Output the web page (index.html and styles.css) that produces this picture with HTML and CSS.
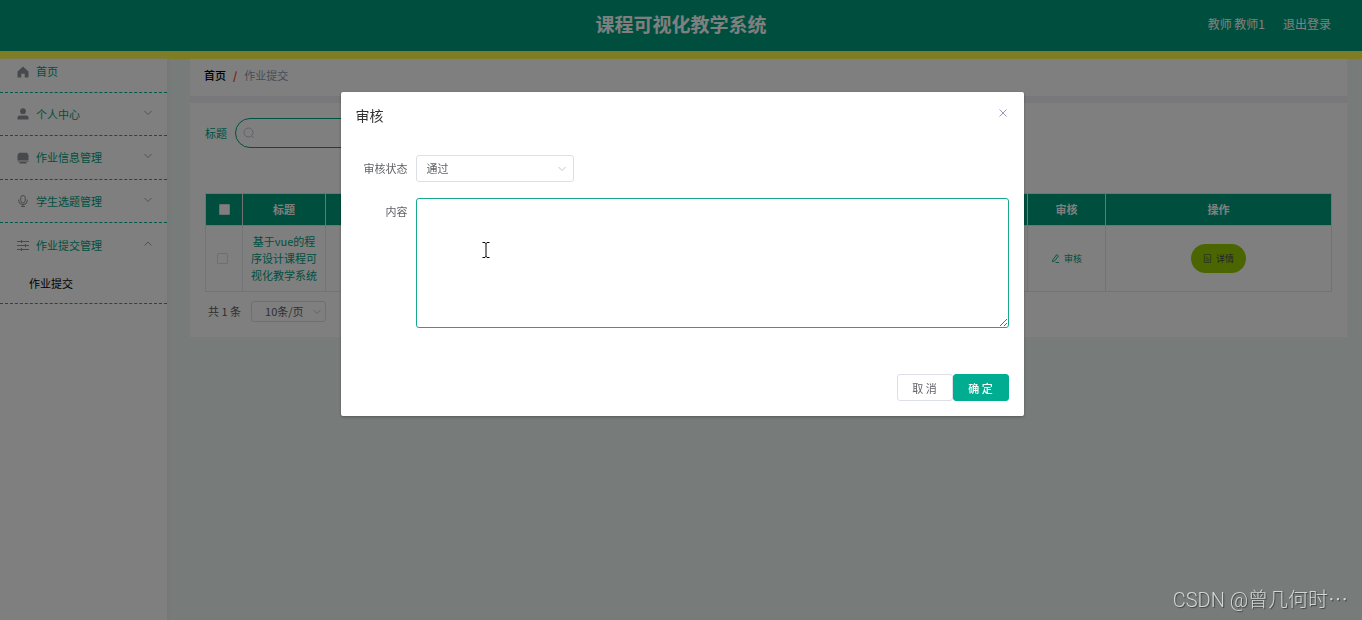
FILE: index.html
```html
<!DOCTYPE html>
<html lang="zh-CN">
<head>
<meta charset="utf-8">
<title>课程可视化教学系统</title>
<link rel="stylesheet" href="styles.css">
</head>
<body>
<div class="app">
  <header class="topbar">
    <h1 class="topbar-title">课程可视化教学系统</h1>
    <div class="topbar-user"><span>教师 教师1</span><a href="#" class="logout">退出登录</a></div>
  </header>
  <div class="layout">
    <nav class="sidebar">
      <a href="#" class="menu-item menu-home">
        <svg class="menu-icon" viewBox="0 0 12 12"><path fill="currentColor" d="M6 .5.5 5.6V11.5H4.3V7.8h3.4v3.7h3.8V5.6z"/></svg><span>首页</span></a>
      <a href="#" class="menu-item">
        <svg class="menu-icon" viewBox="0 0 12 12"><circle cx="6" cy="3.2" r="2.9" fill="currentColor"/><path fill="currentColor" d="M.5 11.5V9.6Q.5 7.5 2.8 7.5H9.2Q11.5 7.5 11.5 9.6v1.9z"/></svg><span>个人中心</span>
        <svg class="arrow" viewBox="0 0 8 8"><path d="M.5 2 4 5.5 7.500 2"/></svg></a>
      <a href="#" class="menu-item menu-tall">
        <svg class="menu-icon" viewBox="0 0 12 12"><path fill="currentColor" d="M2 .8h8L11.500 3v5H.5V3zM.5 8.500h11v.9H.5zM2.500 10h7v1.500h-7z"/></svg><span>作业信息管理</span>
        <svg class="arrow" viewBox="0 0 8 8"><path d="M.5 2 4 5.5 7.500 2"/></svg></a>
      <a href="#" class="menu-item">
        <svg class="menu-icon line" viewBox="0 0 12 12"><rect x="3.8" y=".5" width="4.400" height="7.500" rx="2.200"/><path d="M1.800 4.500v1.700Q2 9.600 6 9.600t4.200-3.400V4.500M6 9.600v1.900M4 11.500h4"/></svg><span>学生选题管理</span>
        <svg class="arrow" viewBox="0 0 8 8"><path d="M.5 2 4 5.5 7.500 2"/></svg></a>
      <div class="menu-group">
        <a href="#" class="menu-item menu-tall">
          <svg class="menu-icon line" viewBox="0 0 12 12"><path d="M0 2.500h12M0 6.500h12M0 10.500h12M4.500 1v3M8.500 5v3M4.500 9v3"/></svg><span>作业提交管理</span>
          <svg class="arrow" viewBox="0 0 8 8"><path d="M.5 5.500 4 2 7.500 5.500"/></svg></a>
        <a href="#" class="submenu-item">作业提交</a>
      </div>
    </nav>
    <main class="main">
      <div class="breadcrumb"><a href="#" class="crumb-home">首页</a><span class="crumb-sep">/</span><span>作业提交</span></div>
      <section class="card">
        <div class="search-row">
          <label for="search-title">标题</label>
          <div class="search-box">
            <svg viewBox="0 0 12 12"><circle cx="5.500" cy="5.500" r="4.500"/><path d="m9 9 2 2"/></svg>
            <input id="search-title" type="text">
          </div>
        </div>
        <table class="table">
          <colgroup><col class="col-check"><col class="col-title"><col><col class="col-audit"><col class="col-action"></colgroup>
          <thead><tr><th><input class="check" type="checkbox" aria-label="全选"></th><th>标题</th><th></th><th>审核</th><th>操作</th></tr></thead>
          <tbody><tr>
            <td><input class="check" type="checkbox" aria-label="选择"></td>
            <td class="cell-title">基于vue的程序设计课程可视化教学系统</td>
            <td></td>
            <td><button class="audit-btn" type="button"><svg viewBox="0 0 10 10"><path d="M2 6.500 6.300.800 8.200 2.200 4 7.800 1.700 8.600zM5 9.500h4"/></svg><span>审核</span></button></td>
            <td><button class="detail-btn" type="button"><svg viewBox="0 0 10 10"><path d="M1.500.500h7v9h-7zM3 3.500h2M3 5.500h4M3 7.500h4"/></svg><span>详情</span></button></td>
          </tr></tbody>
        </table>
        <div class="pager">
          <span>共 1 条</span>
          <div class="select-wrap page-size"><select aria-label="每页条数"><option>10条/页</option></select><svg class="arrow" viewBox="0 0 8 8"><path d="M.5 2 4 5.5 7.500 2"/></svg></div>
        </div>
      </section>
    </main>
  </div>
</div>

<div class="overlay">
  <form class="dialog" role="dialog" aria-labelledby="dialog-title">
    <div class="dialog-head">
      <h2 id="dialog-title">审核</h2>
      <button class="close" type="button" aria-label="关闭"><svg viewBox="0 0 8 8"><path d="m.5.500 7 7M7.500.500l-7 7"/></svg></button>
    </div>
    <div class="form-row">
      <label for="status">审核状态</label>
      <div class="select-wrap status"><select id="status"><option>通过</option></select><svg class="arrow" viewBox="0 0 8 8"><path d="M.5 2 4 5.5 7.500 2"/></svg></div>
    </div>
    <div class="form-row">
      <label for="content">内容</label>
      <textarea id="content"></textarea>
    </div>
    <div class="dialog-foot">
      <button class="btn" type="button">取 消</button>
      <button class="btn btn-primary" type="button">确 定</button>
    </div>
  </form>
</div>
<svg class="cursor" viewBox="0 0 8 16"><path d="M.5.500h2.500l1 1 1-1h2.500M4 1v14M.5 15.500h2.500l1-1 1 1h2.500"/></svg>
<div class="watermark">CSDN @曾几何时⋯</div>
</body>
</html>
```

FILE: styles.css
```css
* { box-sizing: border-box; }
body, h1, h2 { margin: 0; }
body, button, input, select, textarea {
  font-family: "Noto Sans CJK SC", sans-serif;
  font-size: 11px;
}
body { color: #606266; line-height: 17px; overflow: hidden; }
a { text-decoration: none; color: inherit; }
svg { display: block; fill: none; stroke: currentColor; flex: none; }
button { cursor: pointer; }

.app { min-height: 100vh; display: flex; flex-direction: column; background: #eff8f5; }
.topbar {
  display: grid;
  grid-template-columns: 1fr auto 1fr;
  align-items: center;
  height: 59px;
  padding: 0 31px 4px;
  background: #009f7d;
  border-bottom: 8px solid #fffa48;
  color: #fff;
}
.topbar-title { grid-column: 2; font-size: 19px; line-height: 28px; font-weight: 700; }
.topbar-user { display: flex; justify-content: flex-end; gap: 18px; font-size: 12px; }

.layout { flex: 1; display: flex; }
.sidebar { width: 167px; flex: none; background: #fff; box-shadow: 2px 0 3px #e8eeec; color: #00a07c; }
.menu-item {
  display: flex;
  align-items: center;
  gap: 7px;
  height: 43px;
  padding: 0 15px 0 17px;
  border-bottom: 1px dashed #00b08c;
}
.menu-home { height: 34px; padding-bottom: 8px; }
.menu-tall { height: 44px; }
.menu-icon { width: 12px; height: 12px; color: #909399; stroke: none; }
.menu-icon.line { stroke: currentColor; }
.arrow { width: 8px; height: 8px; color: #a0a3a8; }
.menu-item .arrow { margin-left: auto; margin-bottom: 3px; }
.menu-group { height: 81px; border-bottom: 1px dashed #00b08c; }
.menu-group .menu-item { border-bottom: 0; }
.submenu-item { display: block; padding: 8px 29px; color: #000; }

.main { flex: 1; padding: 0 15px 0 23px; }
.breadcrumb {
  display: flex;
  gap: 7px;
  height: 44px;
  padding: 8px 14px;
  background: #fff;
  border-bottom: 7px solid #f0f0f5;
  color: #909bad;
}
.crumb-home { color: #000; font-weight: 500; }
.crumb-sep { color: #ff3d20; font-weight: 700; }
.card { padding: 15px; background: #fff; }
.search-row { display: flex; align-items: center; gap: 8px; margin-bottom: 45px; color: #00a07c; }
.search-box {
  display: flex;
  align-items: center;
  width: 180px;
  height: 30px;
  padding: 0 7px;
  border: 1px solid #00a07c;
  border-radius: 15px;
}
.search-box svg { width: 12px; height: 12px; color: #c0c4cc; }
.search-box input { min-width: 0; flex: 1; border: 0; outline: 0; background: none; }

.table { width: 100%; table-layout: fixed; border-collapse: collapse; text-align: center; border: 1px solid #e2e6ee; }
.col-check { width: 37px; }
.col-title { width: 83px; }
.col-audit { width: 78px; }
.col-action { width: 226px; }
.table th { height: 32px; padding: 0; background: #009f7d; color: #fff; font-weight: 700; border: 1px solid #e2e6ee; }
.table td { padding: 7px 8px; border: 1px solid #e2e6ee; }
.cell-title { color: #00a07c; }
.check { appearance: none; display: block; width: 11px; height: 11px; margin: 0 auto; background: #fff; border: 1px solid #dcdfe6; border-radius: 1px; }
td .check { margin-left: 3px; }
.audit-btn, .detail-btn { display: inline-flex; align-items: center; justify-content: center; gap: 4px; font-size: 9px; border: 0; background: none; }
.audit-btn { color: #00a07c; padding: 0; }
.detail-btn { width: 55px; height: 29px; padding: 0; border-radius: 15px; background: #97cd00; color: #404850; }
.audit-btn svg, .detail-btn svg { width: 9px; height: 9px; }
.detail-btn svg { opacity: .7; }

.pager { display: flex; align-items: center; gap: 10px; padding: 9px 3px 0; }
.select-wrap { display: grid; align-items: center; }
.select-wrap > * { grid-area: 1 / 1; }
.select-wrap select { appearance: none; width: 100%; height: 100%; margin: 0; border: 1px solid #dcdfe6; border-radius: 3px; background: #fff; color: #606266; }
.select-wrap .arrow { justify-self: end; margin-right: 8px; color: #c0c4cc; pointer-events: none; }
.page-size { width: 75px; height: 21px; }
.page-size select { padding: 0 13px 2px; }
.page-size .arrow { margin-right: 5px; }

.overlay { position: fixed; inset: 0; background: rgba(0, 0, 0, .5); }
.dialog {
  width: 683px;
  max-width: 75%;
  margin: 92px 0 0 25%;
  padding: 15px;
  background: #fff;
  border-radius: 2px;
  box-shadow: 0 1px 3px rgba(0, 0, 0, .3);
}
.dialog-head { display: flex; justify-content: space-between; align-items: flex-start; margin-bottom: 32px; }
.dialog-head h2 { font-size: 14px; line-height: 16px; font-weight: 400; color: #303133; }
.close { padding: 2px 2px 3px; border: 0; background: none; color: #9298c0; }
.close svg { width: 8px; height: 8px; }
.form-row { display: flex; margin-bottom: 16px; }
.form-row label { width: 60px; padding-right: 8px; line-height: 26px; text-align: right; }
.status { width: 158px; height: 27px; }
.status select { padding: 0 10px 2px; }
textarea { flex: 1; height: 130px; padding: 5px 10px; border: 1px solid #18a88f; border-radius: 3px; outline: 0; background: #fff; color: #606266; resize: vertical; }
.dialog-foot { display: flex; justify-content: flex-end; margin-top: 46px; }
.btn { width: 56px; height: 27px; padding: 0; border: 1px solid #dcdfe6; border-radius: 3px; background: #fff; color: #606266; }
.btn-primary { border-color: #00ad91; background: #00ad91; color: #fff; font-weight: 500; }

.cursor { position: fixed; left: 482px; top: 242px; width: 8px; height: 16px; color: #000; pointer-events: none; }
.watermark { position: fixed; right: 14px; bottom: 6px; font-family: Roboto, "Noto Sans CJK SC", sans-serif; font-size: 20px; line-height: 28px; font-weight: 300; color: #d4d6d6; text-shadow: 1px 1px 1px #404444; }
```
